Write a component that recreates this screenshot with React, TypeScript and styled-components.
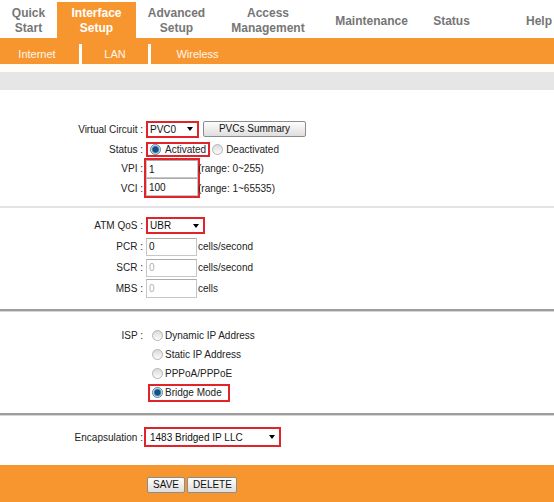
import React from "react";
import styled, { createGlobalStyle } from "styled-components";

const ORANGE = "#f7962f";
const RED = "#e0242a";

const Global = createGlobalStyle`
  html, body { margin: 0; padding: 0; background: #fff; }
  body { font-family: "Liberation Sans", Arial, sans-serif; width: 554px; overflow: hidden; }
`;

const Page = styled.div`
  width: 554px;
`;

const Header = styled.div`
  display: flex;
  height: 38px;
  background: #fff;
`;

const Tab = styled.div<{ $w: number; $active?: boolean; $end?: boolean }>`
  width: ${(p) => p.$w}px;
  height: 36px;
  margin-top: 2px;
  padding-top: 2px;
  padding-right: ${(p) => (p.$end ? 2 : 0)}px;
  box-sizing: border-box;
  display: flex;
  align-items: center;
  justify-content: ${(p) => (p.$end ? "flex-end" : "center")};
  text-align: center;
  font-weight: bold;
  font-size: 12px;
  line-height: 15px;
  color: ${(p) => (p.$active ? "#fff" : "#767676")};
  background: ${(p) => (p.$active ? ORANGE : "transparent")};
`;

const SubBar = styled.div`
  display: flex;
  height: 26px;
  background: ${ORANGE};
`;

const SubItem = styled.div<{ $w: number }>`
  width: ${(p) => p.$w}px;
  padding-top: 10px;
  line-height: 13px;
  font-size: 11px;
  color: #fff7ee;
  text-align: center;
`;

const SubSep = styled.div<{ $ml?: number }>`
  width: 3px;
  margin-left: ${(p) => p.$ml ?? 0}px;
  margin-top: 6px;
  background: #fff;
`;

const LightStrip = styled.div`
  height: 8px;
  background: #fffdf8;
`;

const GrayBand = styled.div`
  height: 18px;
  background: #e6e6e6;
`;

const Section = styled.div<{ $pt: number; $pb: number; $line: "light" | "dark" | "none" }>`
  padding: ${(p) => p.$pt}px 0 ${(p) => p.$pb}px;
  border-bottom: ${(p) =>
    p.$line === "light" ? "2px solid #e3e3e3" : p.$line === "dark" ? "2px solid #9d9d9d" : "none"};
  box-shadow: ${(p) => (p.$line === "dark" ? "0 1px 0 #d6d6d6" : "none")};
`;

const FormGrid = styled.div<{ $rows: string; $cols?: string }>`
  display: grid;
  grid-template-columns: ${(p) => p.$cols ?? "144px 1fr"};
  grid-template-rows: ${(p) => p.$rows};
  align-items: center;
  font-size: 10px;
  color: #222;
`;

const Label = styled.div`
  grid-column: 1;
  text-align: right;
  padding-right: 1px;
  white-space: nowrap;
`;

const Field = styled.div<{ $span?: boolean; $col?: number }>`
  grid-column: ${(p) => (p.$span ? "2 / -1" : String(p.$col ?? 2))};
  display: flex;
  align-items: center;
  white-space: nowrap;
`;

const Select = styled.div<{ $w: number; $h: number; $ml?: number; $pl?: number; $hl?: boolean }>`
  box-sizing: border-box;
  width: ${(p) => p.$w}px;
  height: ${(p) => p.$h}px;
  margin-left: ${(p) => p.$ml ?? 2}px;
  padding: 0 4px 0 ${(p) => p.$pl ?? 2}px;
  border: 2px solid ${(p) => (p.$hl ? RED : "#a5a5a5")};
  background: #fff;
  display: flex;
  align-items: center;
  justify-content: space-between;
  font-size: 10px;
  color: #111;
`;

const Caret = styled.span`
  width: 0;
  height: 0;
  border-left: 3.5px solid transparent;
  border-right: 3.5px solid transparent;
  border-top: 4px solid #000;
`;

const Btn = styled.button<{ $w?: number }>`
  box-sizing: border-box;
  ${(p) => (p.$w ? `width: ${p.$w}px;` : "")}
  height: 16px;
  padding: 0 5px;
  margin: 0;
  font-family: "Liberation Sans", Arial, sans-serif;
  font-size: 10px;
  line-height: 14px;
  color: #111;
  border: 1px solid #8c8c8c;
  border-radius: 2px;
  background: linear-gradient(#fdfdfd, #dedede);
`;

const TextInput = styled.input<{ $w: number; $h?: number }>`
  box-sizing: border-box;
  width: ${(p) => p.$w}px;
  height: ${(p) => p.$h ?? 18}px;
  margin: 0;
  padding: 0 0 0 2px;
  border: 1px solid #c6c6c6;
  border-top-color: #ababab;
  background: #fff;
  font-family: "Liberation Sans", Arial, sans-serif;
  font-size: 10px;
  color: #111;
  outline: none;
  &:disabled {
    color: #b0b0b0;
    background: #fff;
  }
`;

const StackBox = styled.div`
  grid-row: 3 / 5;
  grid-column: 2;
  box-sizing: border-box;
  width: 56px;
  height: 40px;
  border: 2px solid ${RED};
  display: flex;
  flex-direction: column;
  align-self: start;
`;

const Unit = styled.span<{ $ml?: number }>`
  margin-left: ${(p) => p.$ml ?? 1}px;
`;

const Option = styled.div<{ $hl?: boolean; $h: number; $ml?: number; $pl?: number; $gap?: number; $pr?: number }>`
  box-sizing: border-box;
  height: ${(p) => p.$h}px;
  margin-left: ${(p) => p.$ml ?? 0}px;
  padding: 0 ${(p) => p.$pr ?? 6}px 0 ${(p) => p.$pl ?? 2}px;
  border: 2px solid ${(p) => (p.$hl ? RED : "transparent")};
  display: flex;
  align-items: center;
  gap: ${(p) => p.$gap ?? 3}px;
`;

const Radio = styled.span<{ $on?: boolean }>`
  flex-shrink: 0;
  box-sizing: border-box;
  width: 11px;
  height: 11px;
  border-radius: 50%;
  border: 1px solid ${(p) => (p.$on ? "#5f7f98" : "#b4b4b4")};
  background: ${(p) =>
    p.$on
      ? "radial-gradient(circle, #174f7c 0 2.4px, #3f86bb 3.2px, #cfe5f5 4.2px, #f4f9fd 100%)"
      : "linear-gradient(#dadada, #fcfcfc)"};
`;

const Footer = styled.div`
  height: 40px;
  background: ${ORANGE};
  padding: 12px 0 0 147px;
  box-sizing: border-box;
  display: flex;
  gap: 2px;
  align-items: flex-start;
`;

const tabs: { w: number; lines: string[]; active?: boolean; end?: boolean }[] = [
  { w: 57, lines: ["Quick", "Start"] },
  { w: 79, lines: ["Interface", "Setup"], active: true },
  { w: 81, lines: ["Advanced", "Setup"] },
  { w: 102, lines: ["Access", "Management"] },
  { w: 105, lines: ["Maintenance"] },
  { w: 55, lines: ["Status"] },
  { w: 75, lines: ["Help"], end: true },
];

export default function App() {
  return (
    <Page>
      <Global />
      <Header>
        {tabs.map((t) => (
          <Tab key={t.lines.join(" ")} $w={t.w} $active={t.active} $end={t.end}>
            <div>
              {t.lines.map((l, i) => (
                <React.Fragment key={l}>
                  {i > 0 && <br />}
                  {l}
                </React.Fragment>
              ))}
            </div>
          </Tab>
        ))}
      </Header>
      <SubBar>
        <SubItem $w={74}>Internet</SubItem>
        <SubSep $ml={5} />
        <SubItem $w={66}>LAN</SubItem>
        <SubSep />
        <SubItem $w={93}>Wireless</SubItem>
      </SubBar>
      <LightStrip />
      <GrayBand />

      <Section $pt={28} $pb={8} $line="light">
        <FormGrid $rows="22px 18px 20px 20px" $cols="144px 55px 1fr">
          <Label>Virtual Circuit :</Label>
          <Field $span>
            <Select $w={53} $h={17} $hl>
              <span>PVC0</span>
              <Caret />
            </Select>
            <Btn $w={103} style={{ marginLeft: 4 }}>PVCs Summary</Btn>
          </Field>
          <Label>Status :</Label>
          <Field $span>
            <Option $hl $h={15} $ml={2} $pl={2} $gap={4} $pr={2}>
              <Radio $on />
              <span>Activated</span>
            </Option>
            <Option $h={15} $ml={0} $pl={0} $gap={3}>
              <Radio />
              <span>Deactivated</span>
            </Option>
          </Field>
          <Label>VPI :</Label>
          <StackBox>
            <TextInput $w={52} defaultValue="1" />
            <TextInput $w={52} defaultValue="100" />
          </StackBox>
          <Field $col={3}>
            <Unit $ml={-1}>(range: 0~255)</Unit>
          </Field>
          <Label>VCI :</Label>
          <Field $col={3}>
            <Unit $ml={-1}>(range: 1~65535)</Unit>
          </Field>
        </FormGrid>
      </Section>

      <Section $pt={7} $pb={10} $line="dark">
        <FormGrid $rows="21px 21px 21px 21px">
          <Label>ATM QoS :</Label>
          <Field>
            <Select $w={59} $h={17} $hl>
              <span>UBR</span>
              <Caret />
            </Select>
          </Field>
          <Label>PCR :</Label>
          <Field>
            <TextInput $w={51} defaultValue="0" style={{ marginLeft: 2 }} />
            <Unit>cells/second</Unit>
          </Field>
          <Label>SCR :</Label>
          <Field>
            <TextInput $w={51} defaultValue="0" disabled style={{ marginLeft: 2 }} />
            <Unit>cells/second</Unit>
          </Field>
          <Label>MBS :</Label>
          <Field>
            <TextInput $w={51} $h={19} defaultValue="0" disabled style={{ marginLeft: 2 }} />
            <Unit>cells</Unit>
          </Field>
        </FormGrid>
      </Section>

      <Section $pt={15} $pb={11} $line="dark">
        <FormGrid $rows="19px 19px 19px 19px">
          <Label>ISP :</Label>
          <Field>
            <Option $h={18} $ml={4} $pl={1.5} $gap={2.5}>
              <Radio />
              <span>Dynamic IP Address</span>
            </Option>
          </Field>
          <Field>
            <Option $h={18} $ml={4} $pl={1.5} $gap={2.5}>
              <Radio />
              <span>Static IP Address</span>
            </Option>
          </Field>
          <Field>
            <Option $h={18} $ml={4} $pl={1.5} $gap={2.5}>
              <Radio />
              <span>PPPoA/PPPoE</span>
            </Option>
          </Field>
          <Field>
            <Option $hl $h={18} $ml={4} $pl={1.5} $gap={2.5}>
              <Radio $on />
              <span>Bridge Mode</span>
            </Option>
          </Field>
        </FormGrid>
      </Section>

      <Section $pt={12} $pb={18} $line="none">
        <FormGrid $rows="20px">
          <Label>Encapsulation :</Label>
          <Field>
            <Select $w={137} $h={20} $ml={0} $pl={4} $hl>
              <span>1483 Bridged IP LLC</span>
              <Caret />
            </Select>
          </Field>
        </FormGrid>
      </Section>

      <Footer>
        <Btn $w={38}>SAVE</Btn>
        <Btn $w={50}>DELETE</Btn>
      </Footer>
    </Page>
  );
}
